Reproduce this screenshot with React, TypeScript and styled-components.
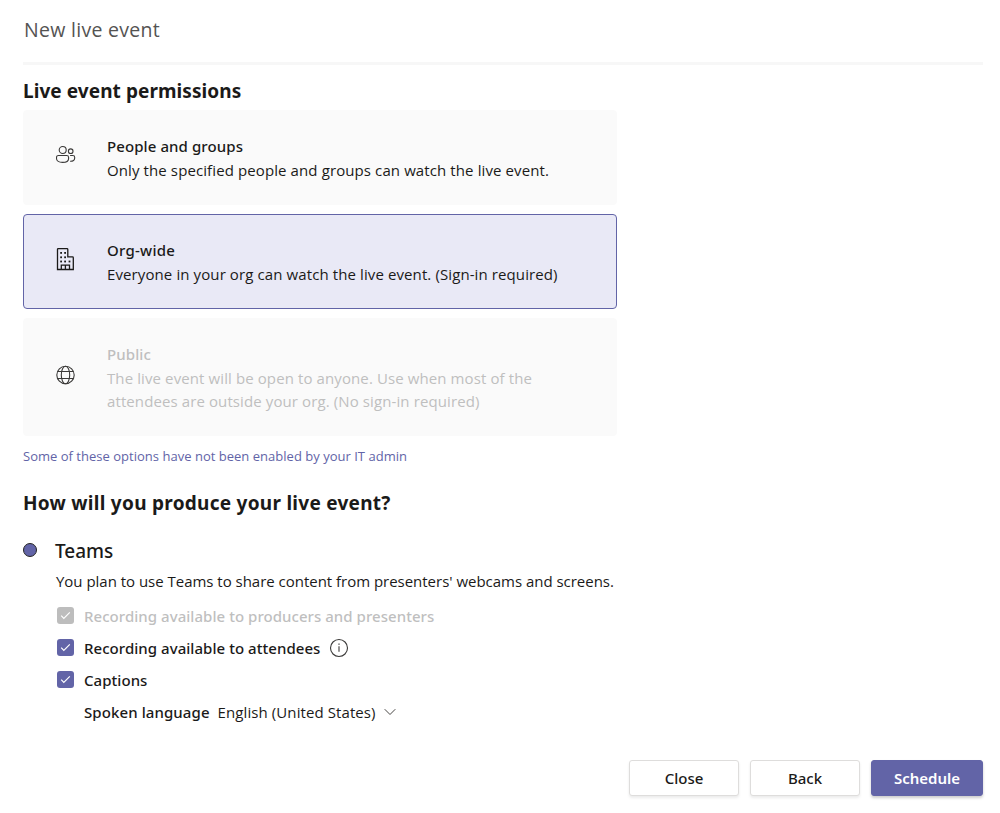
import React from "react";
import styled, { createGlobalStyle } from "styled-components";

const GlobalStyle = createGlobalStyle`
  * { box-sizing: border-box; }
  body {
    margin: 0;
    background: #fff;
    color: #1b1a19;
    font-family: "Noto Sans", "Open Sans", sans-serif;
    font-size: 15px;
  }
  button { font-family: inherit; }
`;

const lightFamily = '"Open Sans", "Noto Sans", sans-serif';

const Dialog = styled.main`
  display: flex;
  flex-direction: column;
  height: 813px;
  padding: 0 17px 17px 23px;
`;

const Header = styled.header`
  height: 65px;
  padding-top: 14px;
  border-bottom: 3px solid #f7f7f7;
`;

const Title = styled.h1`
  margin: 0;
  padding-left: 1px;
  font-family: ${lightFamily};
  font-size: 19.5px;
  font-weight: 400;
  line-height: 31px;
  color: #545352;
  letter-spacing: 0.29px;
`;

const SectionTitle = styled.h2<{ $tracking?: number }>`
  margin: 0;
  font-size: 19px;
  font-weight: 700;
  line-height: 30px;
  letter-spacing: ${(p) => p.$tracking ?? 0.07}px;
`;

const Permissions = styled.section`
  display: flex;
  flex-direction: column;
  padding-top: 11px;
`;

const CardList = styled.div`
  display: flex;
  flex-direction: column;
  gap: 9px;
  width: 594px;
  margin-top: 4px;
`;

const Card = styled.div<{ $selected?: boolean; $disabled?: boolean }>`
  display: grid;
  grid-template-columns: 83px 1fr;
  min-height: 95px;
  padding: 23px 60px 22px 0;
  border: 1px solid ${(p) => (p.$selected ? "#6264a7" : "#fafafa")};
  border-radius: 4px;
  background: ${(p) => (p.$selected ? "#e9e9f6" : "#fafafa")};
  color: ${(p) => (p.$disabled ? "#bfbfbf" : "#1b1a19")};
`;

const IconCell = styled.div<{ $drop?: number }>`
  display: flex;
  justify-content: center;
  align-items: flex-start;
  height: 24px;
  padding-top: ${(p) => p.$drop ?? 0}px;
  color: #3b3a39;
`;

const CardTitle = styled.div<{ $tracking: number }>`
  font-weight: 500;
  line-height: 24px;
  letter-spacing: ${(p) => p.$tracking}px;
`;

const CardText = styled.div`
  margin-top: 1px;
  font-family: ${lightFamily};
  line-height: 23px;
  white-space: nowrap;
  letter-spacing: 0.105px;
`;

const AdminNote = styled.p`
  margin: 9px 0 0;
  font-family: ${lightFamily};
  font-size: 13px;
  line-height: 22px;
  letter-spacing: 0.017px;
  color: #6264a7;
`;

const Production = styled.section`
  display: flex;
  flex-direction: column;
  padding-top: 21px;
`;

const Choice = styled.div`
  display: flex;
  align-items: center;
  gap: 18px;
  height: 30px;
  margin-top: 18px;
`;

const Radio = styled.span`
  width: 14px;
  height: 14px;
  margin-bottom: 2px;
  border: 1px solid #252423;
  border-radius: 50%;
  background: #6264a7;
`;

const ChoiceLabel = styled.span`
  font-size: 19px;
  font-weight: 500;
  line-height: 30px;
`;

const Details = styled.div`
  display: flex;
  flex-direction: column;
  padding-left: 33px;
`;

const Description = styled.p`
  margin: 3px 0 7px;
  font-family: ${lightFamily};
  line-height: 24px;
  letter-spacing: -0.02px;
  white-space: nowrap;
`;

const OptionRow = styled.div<{ $disabled?: boolean }>`
  display: flex;
  align-items: center;
  height: 32px;
  padding-left: 1px;
  font-weight: 500;
  letter-spacing: 0.045px;
  color: ${(p) => (p.$disabled ? "#bfbfbf" : "#1b1a19")};
`;

const CheckBox = styled.span<{ $disabled?: boolean }>`
  display: flex;
  align-items: center;
  justify-content: center;
  width: 17px;
  height: 17px;
  margin: 0 10px 2px 0;
  border-radius: 3px;
  background: ${(p) => (p.$disabled ? "#bdbdbd" : "#6264a7")};
`;

const InfoSlot = styled.span`
  display: flex;
  margin: 0 0 1px 9px;
`;

const LanguageRow = styled.div`
  display: flex;
  align-items: center;
  height: 32px;
  padding-left: 28px;
`;

const LanguageLabel = styled.span`
  font-weight: 500;
  letter-spacing: 0.09px;
`;

const LanguageValue = styled.span`
  margin: 0 8px;
  font-family: ${lightFamily};
  letter-spacing: 0.09px;
`;

const Footer = styled.footer`
  display: flex;
  justify-content: flex-end;
  gap: 11px;
  margin-top: auto;
`;

const Button = styled.button<{ $primary?: boolean }>`
  width: ${(p) => (p.$primary ? 112 : 110)}px;
  height: 36px;
  padding: 0;
  border: 1px solid ${(p) => (p.$primary ? "#6264a7" : "#dedddc")};
  border-radius: 3px;
  background: ${(p) => (p.$primary ? "#6264a7" : "#fff")};
  color: ${(p) => (p.$primary ? "#fff" : "#1b1a19")};
  box-shadow: 0 2px 3px rgba(0, 0, 0, ${(p) => (p.$primary ? 0.2 : 0.08)});
  font-size: 15px;
  font-weight: ${(p) => (p.$primary ? 600 : 500)};
`;

const PeopleIcon = () => (
  <svg width="20" height="20" viewBox="0 0 20 20" fill="none" stroke="currentColor" strokeWidth="1.1">
    <circle cx="6.700" cy="5" r="3.500" />
    <circle cx="14.700" cy="6.200" r="2.300" />
    <path d="M2.400 10.500h8.300c1.100 0 1.900.8 1.900 1.900v1c0 2.600-2.500 4-6.050 4s-6.050-1.400-6.050-4v-1c0-1.100.8-1.900 1.900-1.900z" />
    <path d="M14.100 10.500h2.700c1.100 0 1.900.8 1.900 1.900v.6c0 2.200-1.600 3.400-4.600 3.300" />
  </svg>
);

const BuildingIcon = () => (
  <svg width="19" height="24" viewBox="0 0 19 24" fill="none" stroke="#1b1a19" strokeWidth="1.3">
    <path d="M1.500 22.500V2.400c0-.5.300-.8.800-.8h8.700c.5 0 .8.300.8.800v7.500h4.700c.5 0 .8.300.8.800v11.800z" />
    <path d="M5.300 22v-3.900h8.200V22M9.400 18.100V22" />
    <g fill="#1b1a19" stroke="none">
      <rect x="4.200" y="5" width="1.800" height="1.800" />
      <rect x="8.200" y="5" width="1.800" height="1.800" />
      <rect x="4.200" y="9.400" width="1.800" height="1.800" />
      <rect x="8.200" y="9.400" width="1.800" height="1.800" />
      <rect x="4.200" y="13.600" width="1.800" height="1.800" />
      <rect x="8.200" y="13.600" width="1.800" height="1.800" />
      <rect x="12.600" y="13.600" width="1.800" height="1.800" />
    </g>
  </svg>
);

const GlobeIcon = () => (
  <svg width="20" height="20" viewBox="0 0 20 20" fill="none" stroke="currentColor" strokeWidth="1.100">
    <circle cx="9.500" cy="10" r="8.700" />
    <ellipse cx="9.500" cy="10" rx="4.200" ry="8.700" />
    <path d="M1.500 6.500h16M1.500 13.500h16" />
  </svg>
);

const CheckIcon = () => (
  <svg width="11" height="9" viewBox="0 0 11 9" fill="none" stroke="#fff" strokeWidth="1.200">
    <path d="M1.200 4.700l2.600 2.600L9.800 1.300" />
  </svg>
);

const InfoIcon = () => (
  <svg width="20" height="20" viewBox="0 0 20 20" fill="none" stroke="#3b3a39" strokeWidth="1.100">
    <circle cx="10" cy="10" r="8.500" />
    <path d="M10 8.300v5.500" />
    <rect x="9.400" y="5.500" width="1.200" height="1.300" fill="#3b3a39" stroke="none" />
  </svg>
);

const ChevronIcon = () => (
  <svg width="12" height="8" viewBox="0 0 12 8" fill="none" stroke="#484644" strokeWidth="1">
    <path d="M.7 1.200L6 6.500l5.300-5.300" />
  </svg>
);

export default function App() {
  return (
    <>
      <GlobalStyle />
      <Dialog>
        <Header>
          <Title>New live event</Title>
        </Header>

        <Permissions>
          <SectionTitle>Live event permissions</SectionTitle>
          <CardList>
            <Card>
              <IconCell $drop={11}><PeopleIcon /></IconCell>
              <div>
                <CardTitle $tracking={0.09}>People and groups</CardTitle>
                <CardText>Only the specified people and groups can watch the live event.</CardText>
              </div>
            </Card>
            <Card $selected>
              <IconCell $drop={9}><BuildingIcon /></IconCell>
              <div>
                <CardTitle $tracking={0.24}>Org-wide</CardTitle>
                <CardText>Everyone in your org can watch the live event. (Sign-in required)</CardText>
              </div>
            </Card>
            <Card $disabled>
              <IconCell $drop={23}><GlobeIcon /></IconCell>
              <div>
                <CardTitle $tracking={0.1}>Public</CardTitle>
                <CardText>
                  The live event will be open to anyone. Use when most of the
                  <br />
                  attendees are outside your org. (No sign-in required)
                </CardText>
              </div>
            </Card>
          </CardList>
          <AdminNote>Some of these options have not been enabled by your IT admin</AdminNote>
        </Permissions>

        <Production>
          <SectionTitle $tracking={0.27}>How will you produce your live event?</SectionTitle>
          <Choice>
            <Radio />
            <ChoiceLabel>Teams</ChoiceLabel>
          </Choice>
          <Details>
            <Description>
              You plan to use Teams to share content from presenters' webcams and screens.
            </Description>
            <OptionRow $disabled>
              <CheckBox $disabled><CheckIcon /></CheckBox>
              Recording available to producers and presenters
            </OptionRow>
            <OptionRow>
              <CheckBox><CheckIcon /></CheckBox>
              Recording available to attendees
              <InfoSlot><InfoIcon /></InfoSlot>
            </OptionRow>
            <OptionRow>
              <CheckBox><CheckIcon /></CheckBox>
              Captions
            </OptionRow>
            <LanguageRow>
              <LanguageLabel>Spoken language</LanguageLabel>
              <LanguageValue>English (United States)</LanguageValue>
              <ChevronIcon />
            </LanguageRow>
          </Details>
        </Production>

        <Footer>
          <Button>Close</Button>
          <Button>Back</Button>
          <Button $primary>Schedule</Button>
        </Footer>
      </Dialog>
    </>
  );
}
